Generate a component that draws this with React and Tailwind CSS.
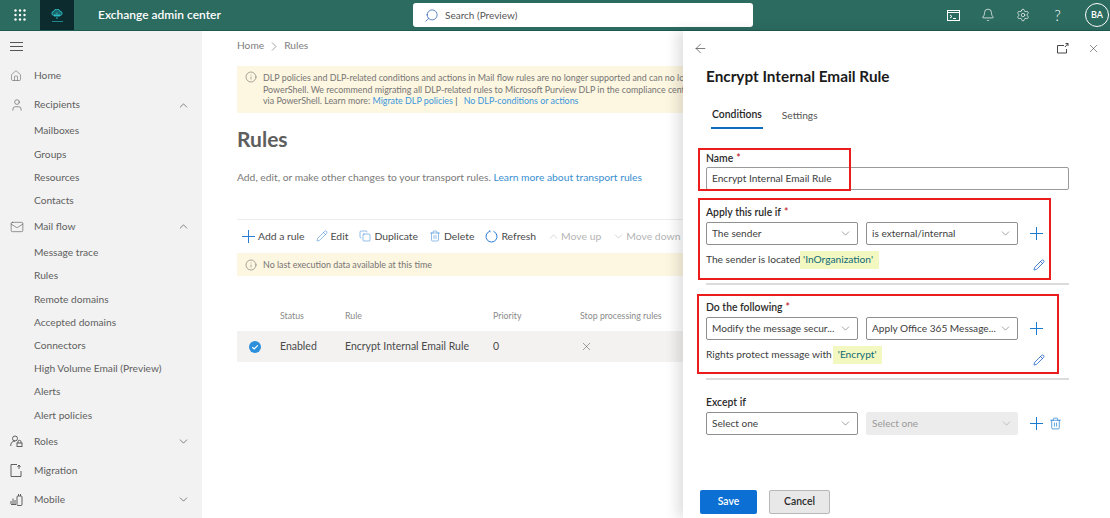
import React from "react";
import { House, User, ChevronUp, ChevronDown, Mail, Pencil, Copy, Trash2, X, ArrowLeft, Info, Search, Bell, Settings } from "lucide-react";

function Dots() {
  const c = [];
  for (let y = 0; y < 3; y++) for (let x = 0; x < 3; x++) c.push(<circle key={x + "-" + y} cx={1.5 + x * 4.5} cy={1.5 + y * 4.5} r="1.2" fill="#fff" />);
  return <svg width="12" height="12" viewBox="0 0 12 12">{c}</svg>;
}

function PlusIcon({ className }) {
  return (
    <svg className={"shrink-0 " + className} width="13" height="13" viewBox="0 0 13 13" fill="none" stroke="currentColor" strokeWidth="1">
      <path d="M6.500 0v13M0 6.500h13" />
    </svg>
  );
}

function NavMain({ icon, label, chevron }) {
  return (
    <div className="flex h-[29px] items-center pl-[10px] pr-[12px]">
      <span className="flex w-[24px] shrink-0 items-center text-[#4f4f4f]">{icon}</span>
      <span className="flex-1 text-[10.2px]">{label}</span>
      {chevron === "up" && <ChevronUp size={13} strokeWidth={1} className="text-[#222]" />}
      {chevron === "down" && <ChevronDown size={13} strokeWidth={1} className="text-[#222]" />}
    </div>
  );
}

function NavSub({ label }) {
  return <div className="flex h-[23.2px] items-center pl-[34px] text-[10.2px]">{label}</div>;
}

function Tool({ icon, label, off }) {
  return (
    <div className={"flex items-center whitespace-nowrap " + (off ? "gap-[1px] text-[#b4b4b4]" : "gap-[3px] text-[#4a4a4a]")}>
      {icon}
      <span>{label}</span>
    </div>
  );
}

function Select({ label, w, disabled }) {
  return (
    <div className={"flex h-[23px] items-center justify-between rounded-[2px] pl-[5px] pr-[5px] text-[10.100px] " + (disabled ? "bg-[#ececec] pl-[6px] text-[#9a9a9a]" : "border border-[#8f8f8f] bg-white text-[#3d3d3d]") + " " + w}>
      <span className="whitespace-nowrap">{label}</span>
      <ChevronDown size={13} strokeWidth={1} className={"shrink-0 " + (disabled ? "text-[#9a9a9a]" : "text-[#555]")} />
    </div>
  );
}

function Field({ label, req, h }) {
  return (
    <div className={"flex items-center text-[10.4px] font-semibold text-[#2a2a2a] " + (h || "h-[19px]")}>
      {label}
      {req && <span className="ml-[3px] text-[#c4262e]">*</span>}
    </div>
  );
}

function Rule({ label, first, second, children }) {
  return (
    <div className="flex h-[95px] flex-col border-b-2 border-[#dcdcdc]">
      <div className="h-[13px]" />
      <Field label={label} req />
      <div className="flex items-center gap-[8px]">
        <Select label={first} w="w-[152px]" />
        <Select label={second} w="w-[152px]" />
        <PlusIcon className="ml-[4px] text-[#1a7ad0]" />
      </div>
      <div className="relative mt-[6px] flex h-[18px] items-center whitespace-pre text-[10.200px] text-[#3d3d3d]">
        {children}
        <Pencil size={12} strokeWidth={1.600} className="absolute left-[327px] top-[8px] text-[#1a5fc4]" />
      </div>
    </div>
  );
}

function Mark({ children, className }) {
  return <span className={"bg-[#f2f8bf] py-[1px] text-[#0f6a78] " + className}>{children}</span>;
}

export default function App() {
  return (
    <div className="relative flex h-[518px] w-[1110px] flex-col overflow-hidden bg-white font-['Lato',sans-serif] text-[#5f5f5f]">
      <header className="flex h-[31px] shrink-0 items-center border-b border-[#1f5a50] bg-[#2c6b60] text-white">
        <div className="flex w-[40px] justify-center"><Dots /></div>
        <div className="flex h-full w-[34px] flex-col items-center justify-center gap-[2px] bg-[#0b2b2f]">
          <svg width="12" height="10" viewBox="0 0 12 10" fill="none" stroke="#2fc3c9" strokeWidth=".9">
            <path d="M2.500 6.500a2.200 2.200 0 0 1 .3-4.300A3.300 3.300 0 0 1 9 2.200a2.200 2.200 0 0 1 .5 4.300Z" fill="#2fc3c9" fillOpacity=".4" />
            <path d="M6 3.500V10M4 5v3M8 5v3" />
          </svg>
          <div className="h-[1px] w-[11px] bg-[#2fc3c9] opacity-60" />
        </div>
        <div className="ml-[24px] w-[315px] text-[12px] font-semibold">Exchange admin center</div>
        <div className="flex h-[24px] w-[340px] items-center rounded-[3px] bg-white pl-[11px] text-[10px] text-[#555]">
          <Search size={15} strokeWidth={1.2} className="mr-[6px] -scale-x-100 text-[#2c5fb0]" />
          Search (Preview)
        </div>
        <div className="ml-[194px] flex items-center gap-[21px]">
          <svg width="13" height="13" viewBox="0 0 13 13" fill="none" stroke="#fff" strokeWidth="1"><rect x=".5" y="1.5" width="12" height="10" /><path d="M.5 3.500h12M3 6l2 1.500L3 9M6 9.500h3" /></svg>
          <Bell size={14} strokeWidth={1.2} />
          <Settings size={14} strokeWidth={1.2} />
          <span className="w-[13px] text-center text-[15px] font-light leading-none">?</span>
          <div className="flex h-[24px] w-[24px] items-center justify-center rounded-full border border-white text-[9px] font-semibold">BA</div>
        </div>
      </header>

      <div className="flex min-h-0 flex-1">
        <nav className="w-[202px] shrink-0 bg-[#f2f2f2]">
          <div className="flex h-[30.5px] items-center pl-[10px] text-[#555]">
            <svg width="13" height="9" viewBox="0 0 13 9" stroke="currentColor" strokeWidth="1"><path d="M0 .5h13M0 4.500h13M0 8.500h13" /></svg>
          </div>
          <NavMain icon={<House size={12} strokeWidth={1} />} label="Home" />
          <NavMain icon={<User size={14} strokeWidth={1} />} label="Recipients" chevron="up" />
          <NavSub label="Mailboxes" />
          <NavSub label="Groups" />
          <NavSub label="Resources" />
          <NavSub label="Contacts" />
          <NavMain icon={<Mail size={14} strokeWidth={1} />} label="Mail flow" chevron="up" />
          <NavSub label="Message trace" />
          <NavSub label="Rules" />
          <NavSub label="Remote domains" />
          <NavSub label="Accepted domains" />
          <NavSub label="Connectors" />
          <NavSub label="High Volume Email (Preview)" />
          <NavSub label="Alerts" />
          <NavSub label="Alert policies" />
          <NavMain
            icon={<svg width="13" height="13" viewBox="0 0 13 13" fill="none" stroke="currentColor" strokeWidth=".9"><circle cx="5" cy="3.500" r="2.500" /><path d="M.8 11a4.200 4.200 0 0 1 4.200-5" /><rect x="7" y="8" width="5" height="3.500" /><path d="M8 8V6.800a1.500 1.500 0 0 1 3 0V8" /></svg>}
            label="Roles"
            chevron="down"
          />
          <NavMain
            icon={<svg width="12" height="13" viewBox="0 0 12 13" fill="none" stroke="currentColor" strokeWidth=".9"><path d="M7 .5H1v12h10V7M9 1v4M7.500 3 9 1l1.500 2" /></svg>}
            label="Migration"
          />
          <NavMain
            icon={<svg width="13" height="13" viewBox="0 0 13 13" fill="none" stroke="currentColor" strokeWidth=".9"><rect x="7" y="3" width="5" height="9.500" rx="1" /><path d="M1 8v3M3 5.500V11M5 7v4M1 11.500h5M8.500 1v2M10.500 1v2" /></svg>}
            label="Mobile"
            chevron="down"
          />
        </nav>

        <main className="mr-[427px] min-w-0 flex-1 overflow-hidden pl-[35px] text-[10.200px]">
          <div className="flex h-[30px] items-center gap-[7px] text-[10.200px] text-[#7d7d7d]">
            Home
            <svg width="6" height="9" viewBox="0 0 6 9" fill="none" stroke="#8a8a8a" strokeWidth=".8"><path d="M1 .5 5 4.500 1 8.500" /></svg>
            <span>Rules</span>
          </div>
          <div className="mt-[5px] flex h-[47px] gap-[5px] whitespace-nowrap bg-[#fdf6e0] px-[8px] pt-[6px] text-[8.900px] leading-[11.600px] text-[#757575]">
            <Info size={12} strokeWidth={1} className="mt-[-1px] shrink-0 text-[#555]" />
            <div className="pl-[1px]">
              <div>DLP policies and DLP-related conditions and actions in Mail flow rules are no longer supported and can no lo</div>
              <div>PowerShell. We recommend migrating all DLP-related rules to Microsoft Purview DLP in the compliance cent</div>
              <div>
                via PowerShell. Learn more: <span className="text-[#3a96dd]">Migrate DLP policies</span>
                <span className="text-[#555]"> | </span>
                <span className="ml-[4px] text-[#3a96dd]">No DLP-conditions or actions</span>
              </div>
            </div>
          </div>
          <h1 className="mt-[12px] h-[28px] text-[21px] leading-[28px] font-bold text-[#5e5e5e]">Rules</h1>
          <p className="mt-[14px] h-[20px] text-[10.300px] leading-[20px] text-[#7a7a7a]">
            Add, edit, or make other changes to your transport rules. <span className="text-[#3a8fd0]">Learn more about transport rules</span>
          </p>
          <div className="mt-[32px] h-[1px] bg-[#ececec]" />
          <div className="flex h-[33px] items-center gap-[11px] pl-[5px] text-[10.400px]">
            <Tool icon={<PlusIcon className="text-[#2b7cd3]" />} label="Add a rule" />
            <Tool icon={<Pencil size={12} strokeWidth={1} className="text-[#2b7cd3]" />} label="Edit" />
            <Tool icon={<Copy size={12} strokeWidth={1} className="text-[#2b7cd3]" />} label="Duplicate" />
            <Tool icon={<Trash2 size={12} strokeWidth={1} className="text-[#2b7cd3]" />} label="Delete" />
            <Tool icon={<svg width="13" height="13" viewBox="0 0 13 13" fill="none" stroke="#2b7cd3" strokeWidth="1"><path d="M8.500 1.400A5.500 5.500 0 1 1 4.500 1.400M4.700 .3l-.2 1.100 1.100.4" /></svg>} label="Refresh" />
            <Tool off icon={<ChevronUp size={13} strokeWidth={1} />} label="Move up" />
            <Tool off icon={<ChevronDown size={13} strokeWidth={1} />} label="Move down" />
          </div>
          <div className="flex h-[23px] items-center gap-[5px] whitespace-nowrap bg-[#fdf6e0] pl-[8px] text-[8.900px] text-[#757575]">
            <Info size={12} strokeWidth={1} className="shrink-0 text-[#555]" />
            <span className="pl-[1px]">No last execution data available at this time</span>
          </div>
          <div className="mt-[28px] flex h-[24px] items-center whitespace-nowrap text-[8.800px] text-[#8a8a8a]">
            <span className="ml-[43px] w-[65px]">Status</span>
            <span className="w-[148px]">Rule</span>
            <span className="w-[87px]">Priority</span>
            <span>Stop processing rules</span>
          </div>
          <div className="mt-[3px] flex h-[31px] items-center whitespace-nowrap bg-[#f3f2f1] text-[10.500px] text-[#4a4a4a]">
            <svg className="ml-[12px]" width="12" height="12" viewBox="0 0 12 12"><circle cx="6" cy="6" r="6" fill="#2b8fdc" /><path d="M3.300 6.200 5.200 8 8.800 4.300" fill="none" stroke="#fff" strokeWidth="1.200" /></svg>
            <span className="ml-[19px] w-[65px]">Enabled</span>
            <span className="w-[148px]">Encrypt Internal Email Rule</span>
            <span className="w-[87px]">0</span>
            <X size={13} strokeWidth={1} className="text-[#555]" />
          </div>
        </main>
      </div>

      <aside className="absolute bottom-0 left-[683px] top-[31px] flex w-[427px] flex-col bg-white pl-[23px] shadow-[-6px_0_12px_rgba(0,0,0,0.12)]">
        <div className="flex h-[35px] items-center justify-between pr-[10px] text-[#333]">
          <ArrowLeft size={15} strokeWidth={1} className="-ml-[13px]" />
          <div className="flex items-center gap-[18px]">
            <svg width="12" height="11" viewBox="0 0 12 11" fill="none" stroke="currentColor" strokeWidth=".9"><path d="M7 2.500H.5v7.500h9V6M8 4l3-3.500M8.500.5H11V3" /></svg>
            <X size={13} strokeWidth={1} />
          </div>
        </div>
        <h2 className="h-[20px] text-[15.300px] leading-[20px] font-bold text-[#1b1b1b]">Encrypt Internal Email Rule</h2>
        <div className="mt-[16px] flex h-[27px] gap-[19px] pl-[5px] text-[10.200px]">
          <div className="flex h-full items-center border-b-2 border-[#0f6cbd] px-[1px] text-[10.400px] font-semibold text-[#262626]">Conditions</div>
          <div className="flex h-full items-center text-[#555]">Settings</div>
        </div>
        <div className="mt-[21px] pr-[41px]">
          <Field label="Name" req h="h-[17px]" />
          <div className="flex h-[23px] items-center rounded-[2px] border border-[#9a9a9a] pl-[5px] text-[10.150px] text-[#3d3d3d]">Encrypt Internal Email Rule</div>
          <Rule label="Apply this rule if" first="The sender" second="is external/internal">
            The sender is located
            <Mark className="pr-[6px]"> 'InOrganization'</Mark>
          </Rule>
          <Rule label="Do the following" first="Modify the message secur..." second="Apply Office 365 Message...">
            Rights protect message with
            <Mark className="ml-[1px] px-[5px]">'Encrypt'</Mark>
          </Rule>
          <div className="h-[13px]" />
          <Field label="Except if" />
          <div className="flex items-center gap-[8px]">
            <Select label="Select one" w="w-[152px]" />
            <Select label="Select one" w="w-[152px]" disabled />
            <PlusIcon className="ml-[4px] text-[#1a7ad0]" />
            <Trash2 size={13} strokeWidth={1.300} className="-ml-[2px] text-[#1a7ad0]" />
          </div>
        </div>
        <div className="absolute left-[17px] top-[459px] flex gap-[12px] text-[10.400px] font-semibold">
          <button className="h-[24px] w-[57px] rounded-[2px] bg-[#0b6fd3] text-white">Save</button>
          <button className="h-[24px] w-[61px] rounded-[2px] border border-[#b8b8b8] bg-[#e8e8e8] text-[#2a2a2a]">Cancel</button>
        </div>
      </aside>

      <div className="pointer-events-none absolute left-[698px] top-[148px] h-[43px] w-[153px] border-2 border-[#ea1c1c]" />
      <div className="pointer-events-none absolute left-[698px] top-[198px] h-[82px] w-[353px] border-2 border-[#ea1c1c]" />
      <div className="pointer-events-none absolute left-[697px] top-[294px] h-[80px] w-[362px] border-2 border-[#ea1c1c]" />
    </div>
  );
}
